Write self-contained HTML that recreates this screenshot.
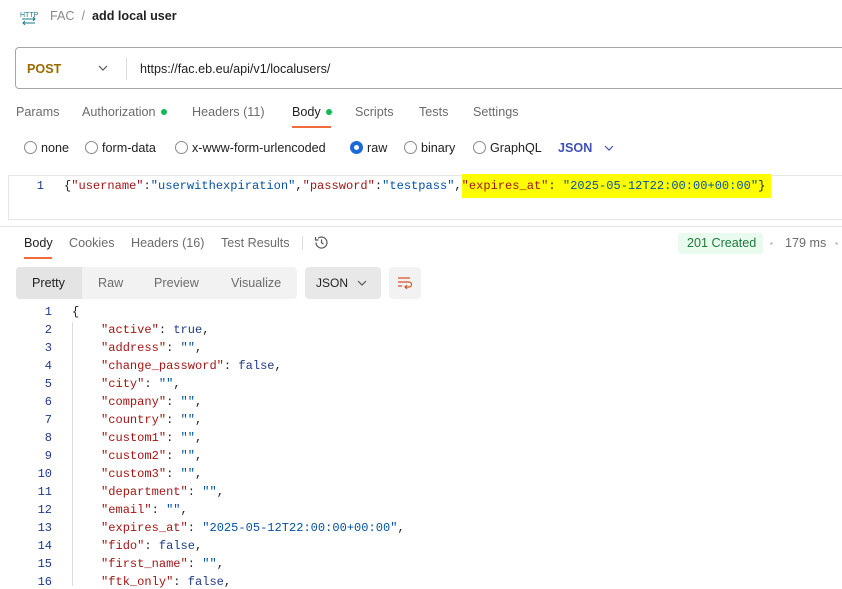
<!DOCTYPE html>
<html><head><meta charset="utf-8"><style>
*{margin:0;padding:0;box-sizing:border-box}
body{width:842px;height:586px;overflow:hidden;background:#fff;font-family:"Liberation Sans",sans-serif;position:relative;color:#212121}
.a{position:absolute;white-space:pre}
.s{font-size:12.6px}
.g{color:#6b6b6b}
.mono{font-family:"Liberation Mono",monospace;font-size:12.05px}
.k{color:#a31515}.v{color:#0451a5}.n{color:#1e3a8a}.p{color:#212121}
.ln{position:absolute;width:30px;text-align:right;color:#1e3a8a;font-family:"Liberation Mono",monospace;font-size:12px}
.dot{display:inline-block;width:6px;height:6px;border-radius:50%;background:#0cbb52;margin-left:5px;vertical-align:1px}
.radio{position:absolute;width:13px;height:13px;border:1px solid #8a8a8a;border-radius:50%;top:141px}
.hl{background:#ffff00;padding:5px 6px 5px 0}
</style></head><body>
<svg class="a" style="left:20px;top:8px" width="18" height="17" viewBox="0 0 18 17"><text x="0" y="9" font-size="7" font-family="Liberation Sans" fill="#1a7a8a">HTTP</text><path d="M2 11h13M13 9l2 2-2 2M15 15H3M5 13l-2 2 2 2" stroke="#1a7a8a" fill="none" stroke-width="1"/></svg>
<div class="a s" style="left:50px;top:9px;color:#8a8a8a">FAC&nbsp; /&nbsp; <span style="color:#212121;font-weight:bold">add local user</span></div>

<div class="a" style="left:15px;top:47px;width:840px;height:42px;border:1px solid #a6a6a6;border-radius:4px"></div>
<div class="a s" style="left:27px;top:62px;color:#9a6a00;font-weight:bold">POST</div>
<svg class="a" style="left:98px;top:64px" width="10" height="8"><path d="M1 2l4 4 4-4" stroke="#555" fill="none" stroke-width="1.2"/></svg>
<div class="a" style="left:126px;top:58px;width:1px;height:22px;background:#ddd"></div>
<div class="a s" style="left:140px;top:62px">https://fac.eb.eu/api/v1/localusers/</div>

<div class="a s g" style="left:16px;top:105px">Params</div>
<div class="a s g" style="left:82px;top:105px">Authorization<span class="dot"></span></div>
<div class="a s g" style="left:192px;top:105px">Headers (11)</div>
<div class="a s" style="left:292px;top:105px">Body<span class="dot"></span></div>
<div class="a" style="left:292px;top:126px;width:39px;height:2px;background:#f26b3a"></div>
<div class="a s g" style="left:355px;top:105px">Scripts</div>
<div class="a s g" style="left:419px;top:105px">Tests</div>
<div class="a s g" style="left:473px;top:105px">Settings</div>

<div class="radio" style="left:24px"></div><div class="a s" style="left:41px;top:141px">none</div>
<div class="radio" style="left:85px"></div><div class="a s" style="left:102px;top:141px">form-data</div>
<div class="radio" style="left:175px"></div><div class="a s" style="left:192px;top:141px">x-www-form-urlencoded</div>
<div class="radio" style="left:350px;border:4px solid #1a6bd8"></div><div class="a s" style="left:367px;top:141px">raw</div>
<div class="radio" style="left:404px"></div><div class="a s" style="left:421px;top:141px">binary</div>
<div class="radio" style="left:473px"></div><div class="a s" style="left:490px;top:141px">GraphQL</div>
<div class="a s" style="left:558px;top:141px;color:#3f51b5;font-weight:bold">JSON</div>
<svg class="a" style="left:604px;top:144px" width="10" height="8"><path d="M1 2l4 4 4-4" stroke="#3f51b5" fill="none" stroke-width="1.2"/></svg>

<div class="a" style="left:8px;top:175px;width:840px;height:45px;border-top:1px solid #e6e6e6;border-left:1px solid #e6e6e6;border-bottom:1px solid #e6e6e6"></div>
<div class="ln" style="left:14px;top:179px">1</div>
<div class="a mono" style="left:64px;top:179px"><span class="p">{</span><span class="k">"username"</span>:<span class="v">"userwithexpiration"</span>,<span class="k">"password"</span>:<span class="v">"testpass"</span>,<span class="hl"><span class="k">"expires_at"</span>: <span class="v">"2025-05-12T22:00:00+00:00"</span>}</span></div>

<div class="a" style="left:0;top:226px;width:842px;height:1px;background:#e6e6e6"></div>
<div class="a s" style="left:24px;top:236px">Body</div>
<div class="a" style="left:24px;top:257px;width:28px;height:2px;background:#f26b3a"></div>
<div class="a s g" style="left:69px;top:236px">Cookies</div>
<div class="a s g" style="left:131px;top:236px">Headers (16)</div>
<div class="a s g" style="left:221px;top:236px">Test Results</div>
<div class="a" style="left:302px;top:236px;width:1px;height:14px;background:#ddd"></div>
<svg class="a" style="left:313px;top:234px" width="17" height="17" viewBox="0 0 17 17"><path d="M3 8.5A5.5 5.5 0 1 0 5 4.3M2.5 3v3h3" stroke="#555" fill="none" stroke-width="1.2"/><path d="M8.5 5.5v3.2l2 1.5" stroke="#555" fill="none" stroke-width="1.2"/></svg>
<div class="a" style="left:678px;top:233px;width:85px;height:21px;background:#e9faee;border-radius:3px"></div>
<div class="a s" style="left:687px;top:236px;color:#1e7a3c">201 Created</div>
<div class="a" style="left:770px;top:242px;width:3px;height:3px;background:#ccc;border-radius:50%"></div>
<div class="a s g" style="left:785px;top:236px">179 ms</div>
<div class="a" style="left:835px;top:242px;width:3px;height:3px;background:#ccc;border-radius:50%"></div>

<div class="a" style="left:16px;top:267px;width:281px;height:32px;background:#f2f2f2;border-radius:4px"></div>
<div class="a" style="left:16px;top:267px;width:66px;height:32px;background:#e4e4e4;border-radius:4px 0 0 4px"></div>
<div class="a s" style="left:32px;top:276px">Pretty</div>
<div class="a s g" style="left:98px;top:276px">Raw</div>
<div class="a s g" style="left:154px;top:276px">Preview</div>
<div class="a s g" style="left:231px;top:276px">Visualize</div>
<div class="a" style="left:305px;top:267px;width:76px;height:32px;background:#e8e8e8;border-radius:4px"></div>
<div class="a" style="left:316px;top:276px;font-size:12px">JSON</div>
<svg class="a" style="left:357px;top:279px" width="10" height="8"><path d="M1 2l4 4 4-4" stroke="#555" fill="none" stroke-width="1.2"/></svg>
<div class="a" style="left:389px;top:267px;width:32px;height:32px;background:#f2f2f2;border-radius:4px"></div>
<svg class="a" style="left:396px;top:275px" width="18" height="16"><path d="M2 3h12M2 7h11a2.5 2.5 0 0 1 0 5H9M11 10l-2 2 2 2M2 11h4" stroke="#d9532b" fill="none" stroke-width="1.2"/></svg>

<div class="a" style="left:72px;top:322px;width:1px;height:264px;background:#ddd"></div>
<div class="ln" style="left:22px;top:305px">1</div><div class="a mono" style="left:72px;top:305px">{</div>
<div class="ln" style="left:22px;top:323px">2</div><div class="a mono" style="left:101px;top:323px"><span class="k">"active"</span>: <span class="n">true</span>,</div>
<div class="ln" style="left:22px;top:341px">3</div><div class="a mono" style="left:101px;top:341px"><span class="k">"address"</span>: <span class="v">""</span>,</div>
<div class="ln" style="left:22px;top:359px">4</div><div class="a mono" style="left:101px;top:359px"><span class="k">"change_password"</span>: <span class="n">false</span>,</div>
<div class="ln" style="left:22px;top:377px">5</div><div class="a mono" style="left:101px;top:377px"><span class="k">"city"</span>: <span class="v">""</span>,</div>
<div class="ln" style="left:22px;top:395px">6</div><div class="a mono" style="left:101px;top:395px"><span class="k">"company"</span>: <span class="v">""</span>,</div>
<div class="ln" style="left:22px;top:413px">7</div><div class="a mono" style="left:101px;top:413px"><span class="k">"country"</span>: <span class="v">""</span>,</div>
<div class="ln" style="left:22px;top:431px">8</div><div class="a mono" style="left:101px;top:431px"><span class="k">"custom1"</span>: <span class="v">""</span>,</div>
<div class="ln" style="left:22px;top:449px">9</div><div class="a mono" style="left:101px;top:449px"><span class="k">"custom2"</span>: <span class="v">""</span>,</div>
<div class="ln" style="left:22px;top:467px">10</div><div class="a mono" style="left:101px;top:467px"><span class="k">"custom3"</span>: <span class="v">""</span>,</div>
<div class="ln" style="left:22px;top:485px">11</div><div class="a mono" style="left:101px;top:485px"><span class="k">"department"</span>: <span class="v">""</span>,</div>
<div class="ln" style="left:22px;top:503px">12</div><div class="a mono" style="left:101px;top:503px"><span class="k">"email"</span>: <span class="v">""</span>,</div>
<div class="ln" style="left:22px;top:521px">13</div><div class="a mono" style="left:101px;top:521px"><span class="k">"expires_at"</span>: <span class="v">"2025-05-12T22:00:00+00:00"</span>,</div>
<div class="ln" style="left:22px;top:539px">14</div><div class="a mono" style="left:101px;top:539px"><span class="k">"fido"</span>: <span class="n">false</span>,</div>
<div class="ln" style="left:22px;top:557px">15</div><div class="a mono" style="left:101px;top:557px"><span class="k">"first_name"</span>: <span class="v">""</span>,</div>
<div class="ln" style="left:22px;top:575px">16</div><div class="a mono" style="left:101px;top:575px"><span class="k">"ftk_only"</span>: <span class="n">false</span>,</div>
</body></html>
